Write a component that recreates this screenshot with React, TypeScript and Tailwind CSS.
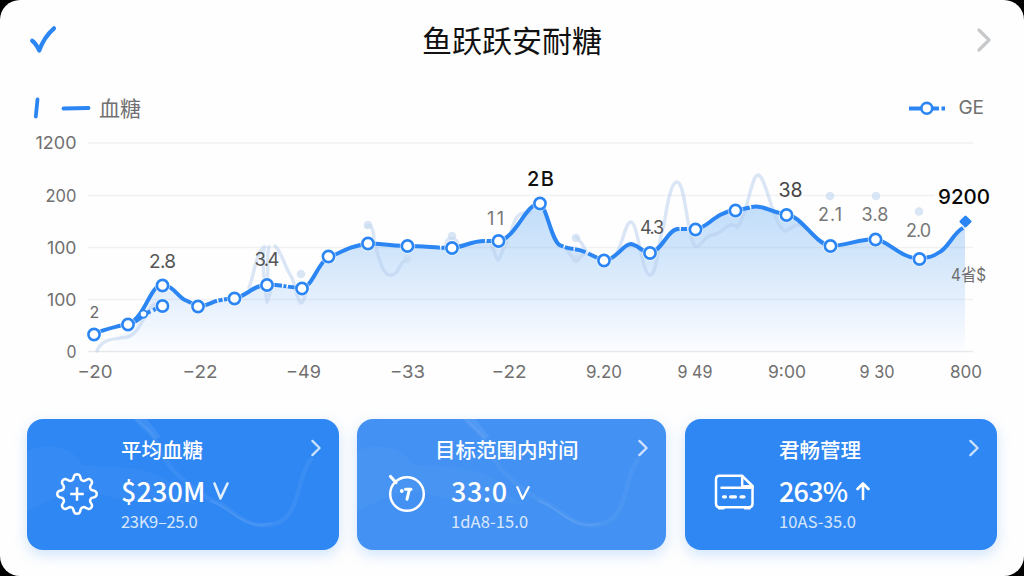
import type { ReactNode } from "react";

type Point = { x: number; y: number };
type Label = Point & { text: string; width: number };

const BLUE = "#2b86f3";

// main curve, split up so the dashed stretches can be styled on their own
const segments: { d: string; dash?: string }[] = [
  { d: "M94 334 C102 330 111 328 119 326 L128 324 C145 318 150 285 162 285" },
  { d: "M128 324 C137 323 141 316 149 312 L162 306", dash: "26 3 4 3 20" },
  { d: "M162 285 C173 285 178 297 185 300 L198 306" },
  { d: "M198 306 C207 307 212 301 221 300 L234 298", dash: "20 1.5 4 1.5 20" },
  { d: "M234 298 C247 297 252 285 267 285" },
  { d: "M267 285 C280 284 290 288 302 288", dash: "15 1.5 3 1.5 20" },
  { d: "M302 288 C312 287 317 265 328 257 C337 255 347 248 353 247 L368 243" },
  { d: "M368 243 C380 244 393 246 407 246" },
  { d: "M407 246 C423 246 437 248 452 248", dash: "33 1.5 30" },
  { d: "M452 248 C465 247 472 240 487 241 L498 241", dash: "34 1.5 30" },
  { d: "M498 241 C516 239 525 204 540 203" },
  { d: "M540 203 C547 207 552 246 562 246 C570 250 577 248 585 252 L604 261", dash: "51 1.5 9 1.5 11 3 40" },
  { d: "M604 261 C617 259 623 244 631 244 C638 245 642 252 650 253 C662 251 668 229 678 229 L696 229", dash: "93 1.5 6 1.5 20" },
  { d: "M696 229 C708 228 714 213 735 210" },
  { d: "M735 210 C746 210 752 205 760 207 C768 208 774 213 786 214", dash: "15 1.5 50" },
  { d: "M786 214 C803 217 813 242 830 246" },
  { d: "M830 246 C845 246 859 239 875 239" },
  { d: "M875 239 C889 241 899 257 919 259" },
  { d: "M919 259 C927 258 934 256 938 253 C948 249 953 233 963 228" },
];

const areaPath =
  "M104 351 L128 329 C145 318 150 289 162 289 C173 289 178 297 185 300 L198 306 C207 307 212 301 221 300 L234 298 C247 297 252 285 267 285 L302 288 C312 287 317 265 328 257 C337 255 347 248 353 247 L368 243 L407 246 L452 248 C465 247 472 240 487 241 L498 241 C516 239 525 204 540 203 C547 207 552 246 562 246 C570 250 577 248 585 252 L604 261 C617 259 623 244 631 244 C638 245 642 252 650 253 C662 251 668 229 678 229 L696 229 C708 228 714 213 735 210 L760 207 C768 208 774 213 786 214 C803 217 813 242 830 246 C845 246 859 239 875 239 C889 241 899 257 919 259 C948 256 953 233 965 226 L965 351 Z";

const ghostPaths = [
  "M97 351 C102 338 116 339 127 337 C139 335 144 314 152 306 L162 300",
  "M249 288 C254 275 257 248 265 247 M264 247 C262 265 264 279 267 302 L273 284 M269 247 C266 258 269 270 267 282",
  "M275 246 C282 252 284 266 292 278 C297 290 297 301 301 303 C306 301 304 292 308 289",
  "M366 227 C371 221 374 231 374 242 C379 257 382 276 391 275 C400 274 397 264 407 259",
  "M445 247 C447 235 456 235 459 247",
  "M492 246 C495 252 496 260 498 260 C501 258 503 246 507 242",
  "M511 232 C516 214 519 213 530 212",
  "M576 237 C582 242 584 247 587 253 C580 253 581 260 576 261 C573 258 570 255 567 250",
  "M615 256 C623 245 625 222 631 222 C638 222 642 276 650 275 C658 274 657 243 664 225 C667 205 671 182 677 182 C686 182 687 242 696 247 C703 245 704 236 712 235 C723 234 729 219 737 227 C747 218 751 175 758 175 C766 175 773 226 785 231 C793 229 794 223 803 225",
];

const ghostDots: Point[] = [
  { x: 301, y: 274 },
  { x: 368, y: 225 },
  { x: 407, y: 259 },
  { x: 452, y: 236 },
  { x: 576, y: 238 },
  { x: 576, y: 259 },
  { x: 830, y: 196 },
  { x: 876, y: 196 },
  { x: 919, y: 211.5 },
];

const markers: Point[] = [
  { x: 94, y: 334.5 },
  { x: 128, y: 324.5 },
  { x: 162.5, y: 285.5 },
  { x: 162.5, y: 306 },
  { x: 198, y: 306.5 },
  { x: 234.5, y: 298.5 },
  { x: 267, y: 285 },
  { x: 302, y: 288.5 },
  { x: 328.5, y: 256.5 },
  { x: 368, y: 243.5 },
  { x: 407.5, y: 246 },
  { x: 452, y: 248 },
  { x: 498.5, y: 241 },
  { x: 540, y: 203.5 },
  { x: 604, y: 260.5 },
  { x: 650, y: 253 },
  { x: 695.5, y: 229.5 },
  { x: 735.5, y: 210.5 },
  { x: 786.5, y: 215 },
  { x: 830.5, y: 246 },
  { x: 875.5, y: 239.5 },
  { x: 919.5, y: 259 },
];

const gridLines = [143, 195.5, 247.5, 299.5];

const yLabels: Label[] = [
  { text: "1200", x: 76.5, y: 149, width: 41 },
  { text: "200", x: 76.5, y: 202, width: 31 },
  { text: "100", x: 76.5, y: 253.5, width: 29.5 },
  { text: "100", x: 76.5, y: 305.5, width: 29.5 },
  { text: "0", x: 76.5, y: 358, width: 10 },
];

const xLabels: Label[] = [
  { text: "−20", x: 95, y: 378, width: 35 },
  { text: "−22", x: 200, y: 378, width: 35 },
  { text: "−49", x: 303.5, y: 378, width: 35 },
  { text: "−33", x: 407.5, y: 378, width: 35 },
  { text: "−22", x: 509, y: 378, width: 35 },
  { text: "9.20", x: 604, y: 378, width: 36 },
  { text: "9 49", x: 695, y: 378, width: 35 },
  { text: "9:00", x: 787, y: 378, width: 38 },
  { text: "9 30", x: 877, y: 378, width: 35 },
  { text: "800", x: 966, y: 378, width: 32 },
];

const valueLabels: (Label & { size: number; fill: string })[] = [
  { text: "2", x: 94, y: 318, width: 9, size: 16, fill: "#666" },
  { text: "2.8", x: 162.5, y: 268, width: 27, size: 19, fill: "#555" },
  { text: "3.4", x: 267, y: 266, width: 25, size: 18.5, fill: "#555" },
  { text: "11", x: 495.5, y: 225, width: 17, size: 18, fill: "#777" },
  { text: "2 B", x: 540.5, y: 185.5, width: 27, size: 20, fill: "#111" },
  { text: "4.3", x: 652, y: 233.5, width: 24, size: 18, fill: "#555" },
  { text: "38", x: 790.5, y: 197, width: 24, size: 19.5, fill: "#444" },
  { text: "2.1", x: 830, y: 221, width: 24, size: 18, fill: "#777" },
  { text: "3.8", x: 875, y: 221, width: 27, size: 18, fill: "#777" },
  { text: "2.0", x: 918.5, y: 237, width: 25, size: 18, fill: "#777" },
  { text: "9200", x: 964, y: 203.5, width: 52, size: 20.5, fill: "#080808" },
];

const GlucoseChart = () => (
  <svg
    viewBox="0 128 1024 264"
    className="block h-[264px] w-[1024px] shrink-0 font-['Inter','Noto_Sans_CJK_SC',sans-serif]"
  >
    <defs>
      <linearGradient id="area" gradientUnits="userSpaceOnUse" x1="0" y1="203" x2="0" y2="351">
        <stop offset="0" stopColor="#c1ddfa" />
        <stop offset="0.35" stopColor="#d2e6fb" />
        <stop offset="0.7" stopColor="#e8f1fd" />
        <stop offset="1" stopColor="#fcfdff" />
      </linearGradient>
    </defs>

    <path d={areaPath} fill="url(#area)" />

    {gridLines.map((y) => (
      <line key={y} x1="88" x2={y === 195.5 ? 935 : 973} y1={y} y2={y} stroke="#8094a8" strokeOpacity="0.12" strokeWidth="1.3" />
    ))}
    <line x1="88" x2="973" y1="351.5" y2="351.5" stroke="#e7e9ec" strokeWidth="1.7" />

    <g fill="none" stroke="#b5cdee" strokeOpacity="0.5" strokeWidth="3.4" strokeLinecap="round" strokeLinejoin="round">
      {ghostPaths.map((d) => (
        <path key={d} d={d} />
      ))}
    </g>
    {ghostDots.map((dot) => (
      <circle key={`${dot.x}-${dot.y}`} cx={dot.x} cy={dot.y} r="4.3" fill="#c9dbf1" fillOpacity="0.7" />
    ))}

    <g fill="none" stroke={BLUE} strokeWidth="4" strokeLinejoin="round">
      {segments.map((segment) => (
        <path key={segment.d} d={segment.d} strokeDasharray={segment.dash} />
      ))}
    </g>

    <circle cx="143.5" cy="314" r="3.7" fill="#fff" stroke={BLUE} strokeWidth="1.8" />
    {markers.map((marker) => (
      <g key={`${marker.x}-${marker.y}`}>
        <circle cx={marker.x} cy={marker.y} r="7.8" fill="#fff" fillOpacity="0.6" />
        <circle cx={marker.x} cy={marker.y} r="5.6" fill="#fff" stroke={BLUE} strokeWidth="2.6" />
      </g>
    ))}
    <rect x="-4.6" y="-4.6" width="9.2" height="9.2" rx="1.3" fill={BLUE} transform="translate(965.5 221.5) rotate(45)" />

    <g fontSize="17.5" fill="#707070">
      {yLabels.map((label) => (
        <text key={label.y} x={label.x - label.width} y={label.y} textLength={label.width} lengthAdjust="spacingAndGlyphs">
          {label.text}
        </text>
      ))}
      {xLabels.map((label) => (
        <text key={label.x} x={label.x - label.width / 2} y={label.y} textLength={label.width} lengthAdjust="spacingAndGlyphs">
          {label.text}
        </text>
      ))}
    </g>
    {valueLabels.map((label) => (
      <text
        key={label.x}
        x={label.x - label.width / 2}
        y={label.y}
        textLength={label.width}
        fontSize={label.size}
        fontWeight={label.size >= 20 ? 500 : 400}
        fill={label.fill}
      >
        {label.text}
      </text>
    ))}
    <text x="951" y="281" textLength="35" lengthAdjust="spacingAndGlyphs" fontSize="17" fill="#707070">
      4省$
    </text>
  </svg>
);

const gearPath = () => {
  const steps = 128;
  const points = Array.from({ length: steps }, (_, i) => {
    const angle = (i / steps) * Math.PI * 2;
    // tanh squares the eight teeth off a little
    const radius = 17.1 + 2.8 * Math.tanh(1.6 * Math.cos(angle * 8));
    return `${(22 + radius * Math.sin(angle)).toFixed(2)} ${(22 - radius * Math.cos(angle)).toFixed(2)}`;
  });
  return `M${points.join("L")}Z`;
};

const GearIcon = () => (
  <svg viewBox="0 0 44 44" className="size-11" fill="none" stroke="currentColor" strokeWidth="2.5" strokeLinejoin="round">
    <path d={gearPath()} />
    <path d="M15.2 22h13.6M22 15.2v13.6" />
  </svg>
);

const TimerIcon = () => (
  <svg viewBox="0 0 44 44" className="size-11" fill="none" stroke="currentColor" strokeWidth="2.5" strokeLinecap="round" strokeLinejoin="round">
    <circle cx="22" cy="22" r="16.8" />
    <path d="m5.5 4.5 5.5 6" strokeWidth="3.2" />
    <path d="M20.5 17.3h5.5M24.4 17.5 22 27.2" strokeWidth="3" />
    <circle cx="16.8" cy="19" r="1.9" fill="currentColor" stroke="none" />
  </svg>
);

const ReportIcon = () => (
  <svg viewBox="0 0 44 44" className="size-11" fill="none" stroke="currentColor" strokeWidth="2.5" strokeLinecap="round" strokeLinejoin="round">
    <path d="M6.5 3.8h22.7L39.5 14v17.8q0 3.5-3.5 3.5H6.5Q3 35.3 3 31.8V7.3q0-3.5 3.5-3.5Z" />
    <path d="M29.2 4v10.3h10.3M8.5 15.8h31M6 36.3h4.5M32 36.3h4.5" />
    <path d="M10.5 24.8h2M17.5 24.8h5M28 24.8h3" strokeWidth="3.2" />
  </svg>
);

const Chevron = ({ className }: { className: string }) => (
  <svg viewBox="0 0 14 24" className={className} fill="none" stroke="currentColor" strokeWidth="3.2" strokeLinecap="round" strokeLinejoin="round">
    <path d="m2 2 10 10L2 22" />
  </svg>
);

const DownMark = ({ className }: { className: string }) => (
  <svg viewBox="0 0 16 18" preserveAspectRatio="none" className={className} fill="none" stroke="currentColor" strokeWidth="2.6" strokeLinecap="round" strokeLinejoin="round">
    <path d="m1.5 1.5 6 15 7-15" />
  </svg>
);

const UpMark = () => (
  <svg viewBox="0 0 14 20" className="ml-[9px] h-5 w-3.5" fill="none" stroke="currentColor" strokeWidth="2.6" strokeLinecap="round" strokeLinejoin="round">
    <path d="M7 18V2.5M1.5 8 7 2.5 12.5 8" />
  </svg>
);

// faint swirl behind the card text
const CardWave = () => (
  <svg viewBox="0 0 312 131" preserveAspectRatio="none" className="absolute inset-0 size-full" fill="none">
    <path d="M0 32C25 22 45 28 56 46c30 2 60 1 79 12 15 5 12 22 40 28-45-5-75 0-105-12C40 68 20 84 0 92Z" fill="#fff" fillOpacity="0.03" />
    <path d="M108 0c10 10 18 13 24 28 8 22 28 38 52 53 22 6 30 28 58 25 34-4 25-46 43-67" stroke="#fff" strokeOpacity="0.05" strokeWidth="4.5" />
    <path d="M108 0h12l14 18-6 2Z" fill="#fff" fillOpacity="0.08" />
    <path d="M184 82c20 7 35 31 61 22" stroke="#fff" strokeOpacity="0.08" strokeWidth="2" />
  </svg>
);

interface StatCardProps {
  title: string;
  titleClass?: string;
  value: string;
  valueClass: string;
  range: string;
  rangeClass: string;
  icon: ReactNode;
  mark: ReactNode;
  tone: string;
  wave?: boolean;
}

const StatCard = ({ title, titleClass = "", value, valueClass, range, rangeClass, icon, mark, tone, wave }: StatCardProps) => (
  <div className={`relative flex overflow-hidden rounded-2xl text-white shadow-[0_5px_14px_rgba(70,150,245,0.25)] ${tone}`}>
    {wave && <CardWave />}
    <div className="relative w-[94px] shrink-0 pt-[53px] pl-7">{icon}</div>
    <div className="relative flex flex-1 flex-col items-start pt-[15px] whitespace-nowrap">
      <h2 className={`text-[20.5px] leading-[30px] font-medium ${titleClass}`}>{title}</h2>
      <div className="mt-[7px] flex h-10 items-center">
        <span className={`text-[27px] leading-10 font-medium ${valueClass}`}>{value}</span>
        {mark}
      </div>
      <p className={`text-[16.5px] leading-5 text-white/80 ${rangeClass}`}>{range}</p>
    </div>
    <Chevron className="relative mt-5 mr-[18px] h-[18px] w-2.5 text-white/75" />
  </div>
);

export default function App() {
  return (
    <div className="h-[576px] w-[1024px] overflow-hidden bg-black font-['Noto_Sans_CJK_SC','Noto_Sans',sans-serif]">
      <main className="flex h-full flex-col overflow-hidden rounded-[20px] bg-[#fefefe]">
        <header className="flex h-20 shrink-0 items-center justify-between pr-[33px] pl-[29px]">
          <svg viewBox="0 0 28 30" className="h-[30px] w-7" fill="none" stroke={BLUE} strokeWidth="4.2" strokeLinecap="round" strokeLinejoin="round">
            <path d="M3.2 15.8Q7 18.5 10.2 25.5Q15 12 25 3.3" />
          </svg>
          <h1 className="mr-2.5 pb-0.5 text-[30px] leading-10 text-[#111]">鱼跃跃安耐糖</h1>
          <Chevron className="h-6 w-3.5 text-[#c7c9cc]" />
        </header>

        <div className="flex h-12 shrink-0 items-center justify-between px-8 pt-2">
          <div className="flex items-center">
            <svg viewBox="0 0 60 22" className="h-[22px] w-[60px]" stroke={BLUE} strokeWidth="3.8" strokeLinecap="round">
              <path d="M5.5 2.5 3.8 19.5M31.5 11.5 56.5 11" />
            </svg>
            <span className="ml-[7px] pb-0.5 text-[21px] leading-6 text-[#707070]">血糖</span>
          </div>
          <div className="flex items-center pr-2">
            <svg viewBox="0 0 38 16" className="h-4 w-[38px]" fill="none" stroke={BLUE} strokeWidth="3.8">
              <path d="M0 8.5h14M22 8.5h8M32.5 8.5h3.5" />
              <circle cx="17.8" cy="8.3" r="5.4" fill="#fff" strokeWidth="2.6" />
            </svg>
            <span className="ml-[11px] font-['Inter',sans-serif] text-[19px] leading-6 text-[#707070]">GE</span>
          </div>
        </div>

        <GlucoseChart />

        <section className="mt-[27px] flex h-[131px] shrink-0 pl-[27px] *:shrink-0 *:first:w-[312px] *:last:w-[312px] *:nth-2:mr-[19px] *:nth-2:ml-[18px] *:nth-2:w-[309px]">
          <StatCard
            title="平均血糖"
            value="$230M"
            valueClass="tracking-[0.1px]"
            range="23K9–25.0"
            rangeClass="tracking-[-0.3px]"
            icon={<GearIcon />}
            mark={<DownMark className="ml-2 h-[18px] w-4 text-white/85" />}
            tone="bg-[#2f87f3]"
            wave
          />
          <StatCard
            title="目标范围内时间"
            titleClass="-ml-4"
            value="33:0"
            valueClass="tracking-[0.6px]"
            range="1dA8-15.0"
            rangeClass="tracking-[0.1px]"
            icon={<TimerIcon />}
            mark={<DownMark className="mt-1 ml-2 h-3.5 w-3.5" />}
            tone="bg-[#4291f3]"
            wave
          />
          <StatCard
            title="君畅菅理"
            value="263%"
            valueClass="tracking-[-0.8px]"
            range="10AS-35.0"
            rangeClass="tracking-[0.1px]"
            icon={<ReportIcon />}
            mark={<UpMark />}
            tone="bg-[#2f87f3]"
          />
        </section>
      </main>
    </div>
  );
}
